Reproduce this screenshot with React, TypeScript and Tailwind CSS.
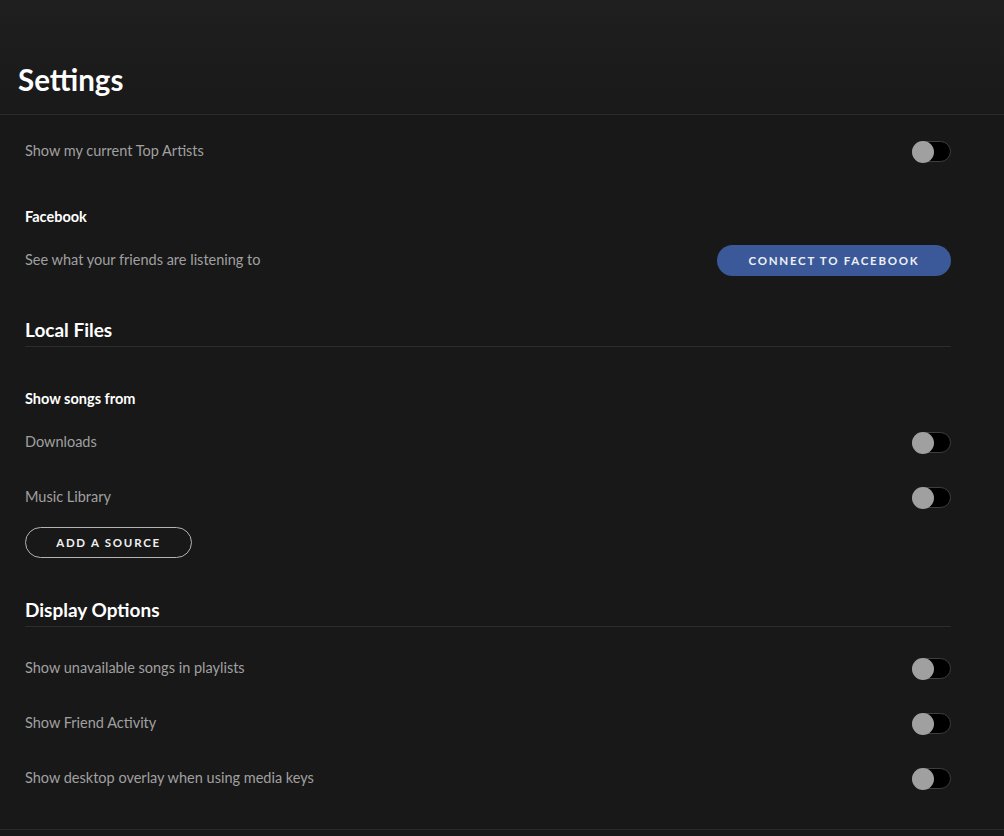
import React from 'react'

function Toggle() {
  return (
    <div className="relative h-[22px] w-[39px] shrink-0">
      <div className="absolute inset-x-0 top-0 h-[21px] rounded-full border border-[#3e3e3e] bg-black" />
      <div className="absolute left-0 top-0 h-[22px] w-[22px] rounded-full bg-[#a0a0a0]" />
    </div>
  )
}

function ToggleRow({ label }: { label: string }) {
  return (
    <div className="flex h-[55px] items-center justify-between">
      <span className="-mt-[2px] text-[14.5px] text-[#a0a0a0]">{label}</span>
      <Toggle />
    </div>
  )
}

function SectionTitle({ children, className = '' }: { children: React.ReactNode; className?: string }) {
  return (
    <h2 className={`border-b border-[#2c2c2c] pb-[5px] text-[19px] font-bold leading-[22px] text-white ${className}`}>
      {children}
    </h2>
  )
}

export default function App() {
  return (
    <div
      className="min-h-[836px] w-full bg-[#181818]"
      style={{ fontFamily: 'Lato, "Noto Sans", "Liberation Sans", sans-serif' }}
    >
      {/* Header */}
      <div className="h-[115px] border-b border-[#2a2a2a] bg-gradient-to-b from-[#1f1f1f] to-[#191919] pl-[18px] pt-[62px]">
        <h1 className="text-[29.5px] font-bold leading-[36px] text-white">Settings</h1>
      </div>

      <div className="pl-[25px] pr-[53px]">
        <div className="flex h-[74px] items-center justify-between">
          <span className="-mt-[2px] text-[14.5px] text-[#a0a0a0]">Show my current Top Artists</span>
          <Toggle />
        </div>

        <h3 className="mt-[20px] text-[14.5px] font-bold leading-[16px] text-white">Facebook</h3>
        <div className="mt-[20px] flex h-[31px] items-center justify-between">
          <span className="-mt-[1px] text-[14.5px] text-[#a0a0a0]">See what your friends are listening to</span>
          <button className="h-[31px] w-[234px] rounded-full bg-[#3b5998] text-[11.5px] font-bold tracking-[0.15em] text-[#eef0f6]">
            CONNECT TO FACEBOOK
          </button>
        </div>

        <SectionTitle className="mt-[43px]">Local Files</SectionTitle>

        <h3 className="mt-[44px] text-[14.5px] font-bold leading-[16px] text-white">Show songs from</h3>
        <div className="mt-[8px]">
          <ToggleRow label="Downloads" />
          <ToggleRow label="Music Library" />
        </div>
        <button className="mt-[2px] h-[31px] w-[167px] rounded-full border border-[#b3b3b3] text-[11.5px] font-bold tracking-[0.15em] text-[#f0f0f0]">
          ADD A SOURCE
        </button>

        <SectionTitle className="mt-[41px]">Display Options</SectionTitle>
        <div className="mt-[14px]">
          <ToggleRow label="Show unavailable songs in playlists" />
          <ToggleRow label="Show Friend Activity" />
          <ToggleRow label="Show desktop overlay when using media keys" />
        </div>
      </div>

      <div className="mt-[23px] border-t border-[#2a2a2a]" />
    </div>
  )
}
